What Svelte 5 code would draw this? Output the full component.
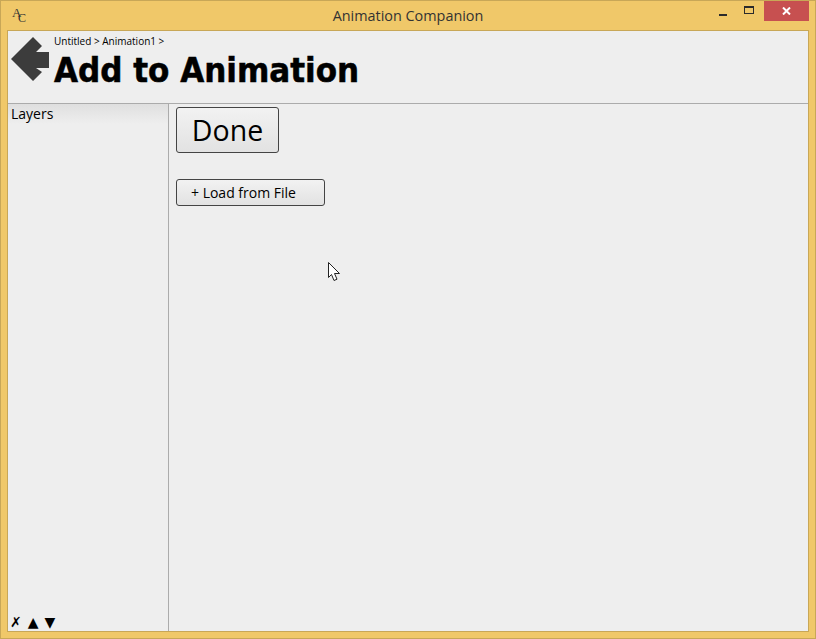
<script>
  let layers = [];
</script>

<div class="window">
  <div class="titlebar">
    <span class="app-icon"><span class="icon-a">A</span><span class="icon-c">C</span></span>
    <span class="title">Animation Companion</span>
    <div class="controls">
      <span class="ctl"><svg width="8" height="2"><rect width="8" height="2" fill="#2b2b2b" /></svg></span>
      <span class="ctl max"><svg width="10" height="8"><path d="M0 0h10v8H0z M1 2v5h8V2z" fill="#2b2b2b" fill-rule="evenodd" /></svg></span>
      <span class="ctl close"><svg width="9" height="8" viewBox="0 0 9 8"><path d="M1 .5 L8 7.5 M8 .5 L1 7.5" stroke="#fff" stroke-width="2" /></svg></span>
    </div>
  </div>

  <div class="client">
    <header class="head">
      <svg class="back" width="40" height="46" viewBox="0 0 40 46">
        <path d="M0 23 L22 1 L31 10 L25 16 H38 V32 H25 L31 36 L22 45 Z" fill="#3c3c3c" />
      </svg>
      <div class="head-text">
        <div class="crumbs">Untitled &gt; Animation1 &gt;</div>
        <h1>Add to Animation</h1>
      </div>
    </header>

    <div class="body">
      <aside class="sidebar">
        <div class="layers-title">Layers</div>
        <div class="layers">
          {#each layers as layer}
            <div>{layer}</div>
          {/each}
        </div>
        <div class="tools">
          <span class="cross">✗</span>
          <span>▲</span>
          <span>▼</span>
        </div>
      </aside>
      <main class="main">
        <button class="done">Done</button>
        <button class="load">+ Load from File</button>
      </main>
    </div>
  </div>

  <svg class="cursor" width="14" height="21" viewBox="0 0 14 21">
    <path d="M1.5 1.5 V16.5 L4.5 13.5 L7 19.5 L10 18.2 L7.5 12.5 H12.5 Z" fill="#fff" stroke="#222" stroke-width="1" />
  </svg>
</div>

<style>
  :global(body) {
    margin: 0;
  }

  .window {
    position: relative;
    box-sizing: border-box;
    width: 816px;
    height: 639px;
    display: flex;
    flex-direction: column;
    background: #f0c869;
    border: 1px solid #c8a757;
    font-family: "Open Sans", sans-serif;
    color: #000;
    overflow: hidden;
  }

  .titlebar {
    height: 29px;
    display: flex;
    align-items: center;
    position: relative;
    flex: none;
  }

  .app-icon {
    position: absolute;
    left: 11px;
    top: 5px;
    width: 14px;
    height: 17px;
    font-family: "Liberation Serif", serif;
    color: #333;
  }

  .icon-a {
    position: absolute;
    left: 0;
    top: 0;
    font-size: 13px;
    line-height: 13px;
  }

  .icon-c {
    position: absolute;
    left: 6px;
    top: 6px;
    font-size: 12px;
    line-height: 13px;
  }

  .title {
    flex: 1;
    text-align: center;
    font-size: 14.4px;
    color: #333;
    line-height: 28px;
  }

  .controls {
    position: absolute;
    top: 0;
    right: 6px;
    display: flex;
  }

  .ctl {
    width: 27px;
    display: flex;
    align-items: center;
    justify-content: center;
    padding-top: 7px;
    height: 13px;
  }

  .max {
    width: 25px;
    margin-right: 3px;
    padding-top: 0;
    height: 17px;
  }

  .close {
    width: 45px;
    background: #c75050;
    padding-top: 0;
    height: 20px;
  }

  .client {
    margin: 0 6px 6px;
    flex: 1;
    display: flex;
    flex-direction: column;
    background: #eeeeee;
    border: 1px solid #c8a757;
    min-height: 0;
  }

  .head {
    height: 72px;
    flex: none;
    display: flex;
    border-bottom: 1px solid #ababab;
  }

  .back {
    margin: 5px 0 0 3px;
    flex: none;
  }

  .head-text {
    margin-left: 3px;
    padding-top: 3px;
  }

  .crumbs {
    font-size: 10px;
    line-height: 14px;
  }

  h1 {
    margin: 0;
    font-family: "DejaVu Sans", sans-serif;
    font-stretch: condensed;
    font-weight: 700;
    font-size: 34.5px;
    line-height: 45px;
    -webkit-text-stroke: 0.5px #000;
  }

  .body {
    flex: 1;
    display: flex;
    min-height: 0;
  }

  .sidebar {
    width: 160px;
    flex: none;
    display: flex;
    flex-direction: column;
    border-right: 1px solid #ababab;
  }

  .layers-title {
    height: 20px;
    padding-left: 3px;
    font-size: 14px;
    line-height: 20px;
    background: linear-gradient(#dfdfdf, #eeeeee);
  }

  .layers {
    flex: 1;
  }

  .tools {
    display: flex;
    gap: 6px;
    padding: 0 0 0 2px;
    font-family: "DejaVu Sans", sans-serif;
    font-size: 14px;
    line-height: 17px;
  }

  .cross {
    font-style: italic;
  }

  .main {
    flex: 1;
    display: flex;
    flex-direction: column;
    align-items: flex-start;
    padding: 3px 0 0 7px;
  }

  button {
    box-sizing: border-box;
    font-family: "Open Sans", sans-serif;
    color: #000;
    border: 1px solid #444;
    border-radius: 3px;
    background: linear-gradient(#f2f2f2, #e2e2e2);
    padding: 0;
  }

  .done {
    width: 103px;
    height: 46px;
    font-size: 28.5px;
  }

  .load {
    margin-top: 26px;
    width: 149px;
    height: 27px;
    font-size: 14px;
    text-align: left;
    padding-left: 14px;
  }

  .cursor {
    position: absolute;
    left: 326px;
    top: 260px;
  }
</style>
